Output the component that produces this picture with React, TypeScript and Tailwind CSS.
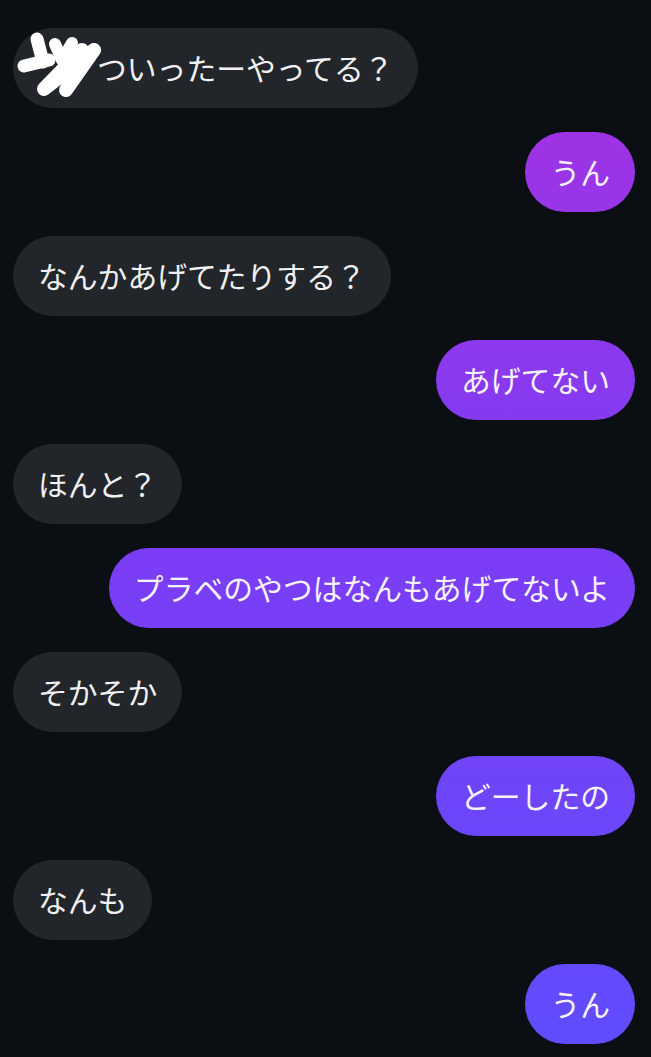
const messages = [
  { me: false, text: "ついったーやってる？", scribble: true },
  { me: true, text: "うん" },
  { me: false, text: "なんかあげてたりする？" },
  { me: true, text: "あげてない" },
  { me: false, text: "ほんと？" },
  { me: true, text: "プラベのやつはなんもあげてないよ" },
  { me: false, text: "そかそか" },
  { me: true, text: "どーしたの" },
  { me: false, text: "なんも" },
  { me: true, text: "うん" },
];

// white brush scribble hiding a name
const Scribble = () => (
  <svg
    width="79"
    height="64"
    viewBox="0 0 79 64"
    className="-ml-[20px] shrink-0 overflow-visible"
    fill="none"
    stroke="#ffffff"
    strokeLinecap="round"
    strokeLinejoin="round"
  >
    <path d="M19 3 L25 26" strokeWidth="13" />
    <path d="M6 30 L31 24" strokeWidth="13" />
    <path d="M37 8 L44 24 L54 7" strokeWidth="12" />
    <path d="M64 14 L26 53 L76 14 L48 54" strokeWidth="14" />
  </svg>
);

const App = () => {
  return (
    <div className="min-h-screen bg-[#0b0f14] px-[13px] pr-[16px] pt-[28px] pb-[13px] font-['Noto_Sans_CJK_JP','Noto_Sans',sans-serif]">
      <div className="flex flex-col gap-[24px]">
        {messages.map((m, i) => (
          <div key={i} className={m.me ? "flex justify-end" : "flex justify-start"}>
            <div
              className={
                m.me
                  ? "flex h-[80px] items-center rounded-full bg-linear-to-b from-[#a92de0] via-[#7c3cf4] to-[#5f4cff] bg-fixed px-[25px] text-[29.8px] leading-none text-[#f5f2fb]"
                  : "flex h-[80px] items-center rounded-full bg-[#22262b] px-[25px] text-[29.8px] leading-none text-[#f0f1f2]"
              }
            >
              {m.scribble && <Scribble />}
              <span>{m.text}</span>
            </div>
          </div>
        ))}
      </div>
    </div>
  );
};

export default App;
